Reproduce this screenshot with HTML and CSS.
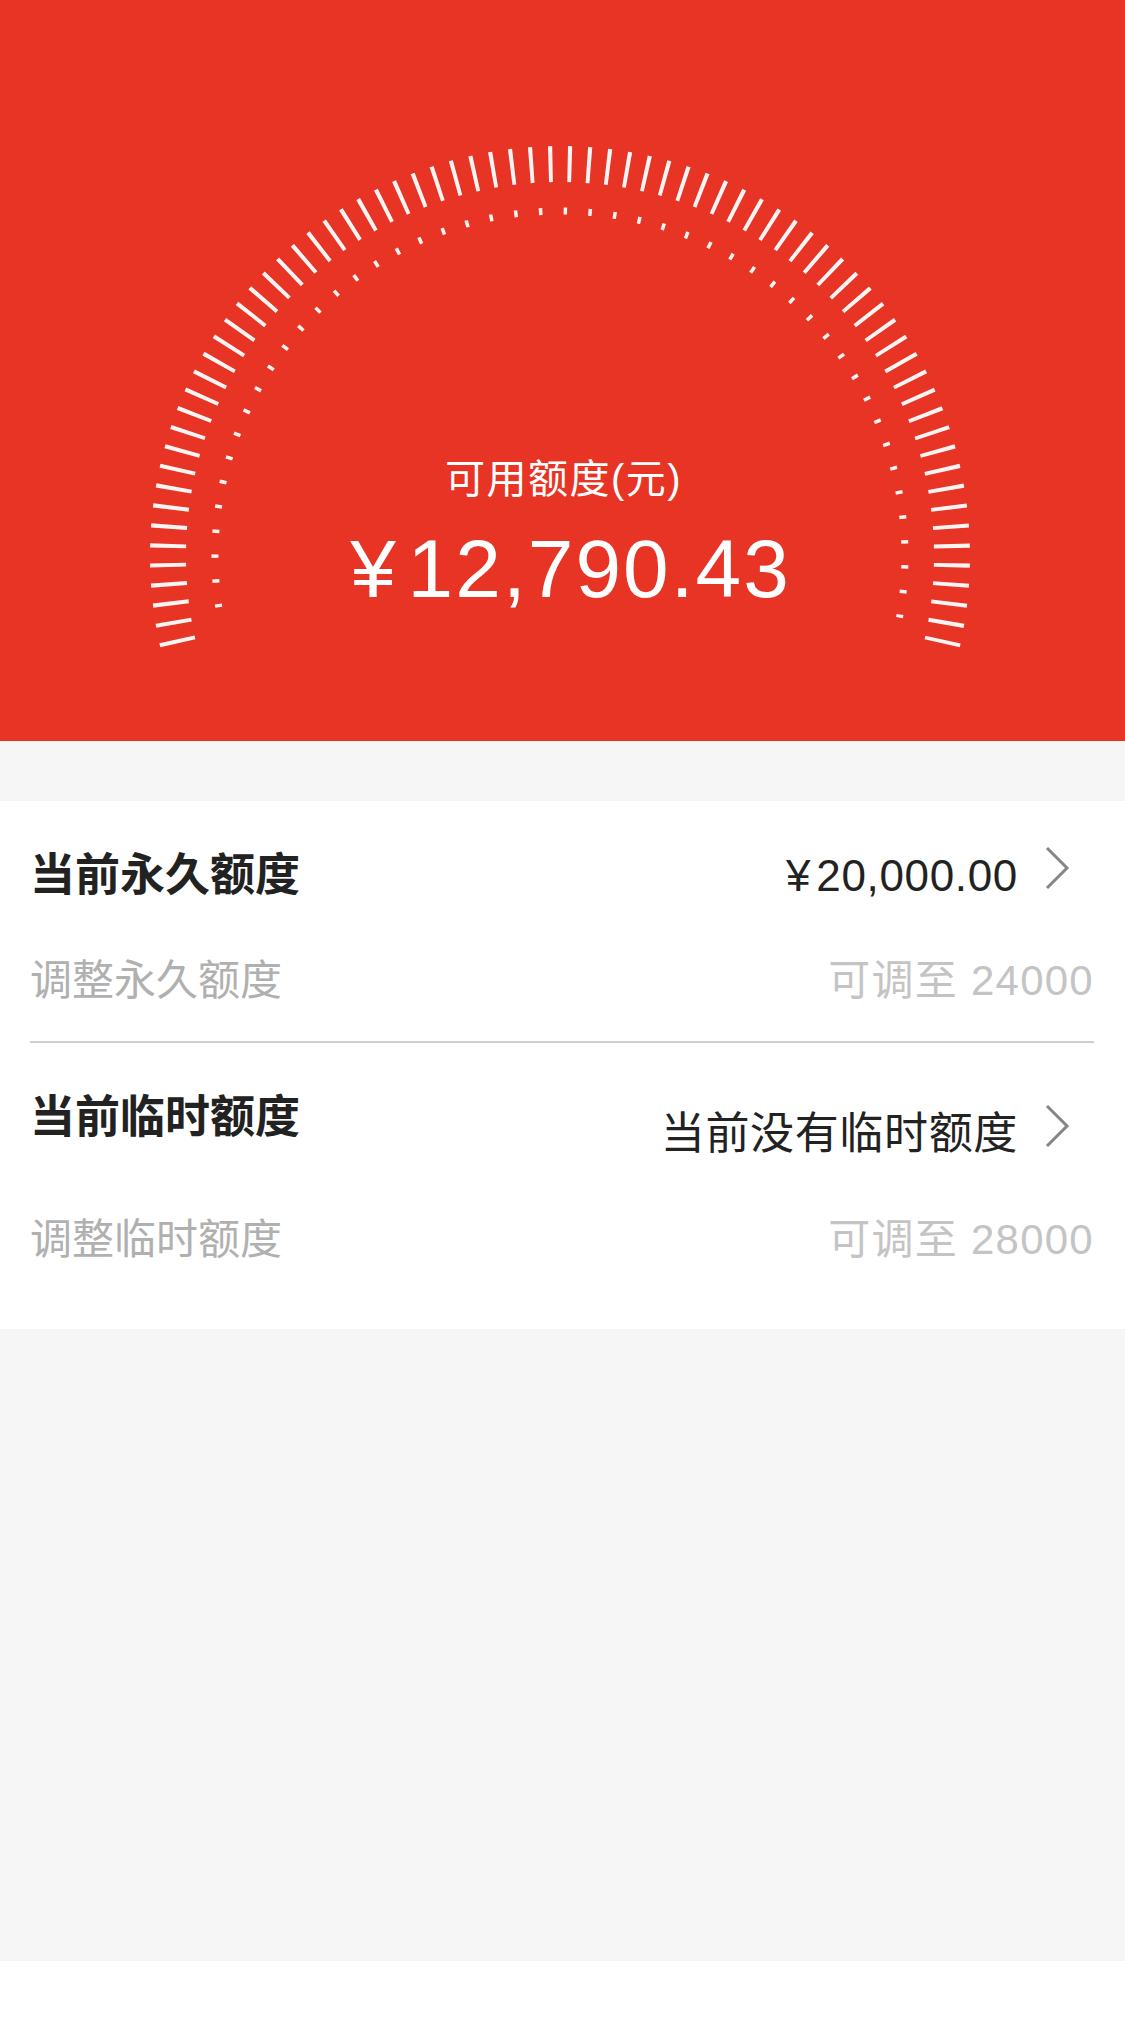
FILE: index.html
```html
<!DOCTYPE html>
<html lang="zh-CN">
<head>
<meta charset="utf-8">
<title>额度</title>
<link rel="stylesheet" href="styles.css">
</head>
<body>
<div class="page">
  <header class="hero">
    <svg class="gauge" viewBox="0 0 1125 741" width="1125" height="741" aria-hidden="true">
      <path class="ticks" d="M177.83 643.24 A392 392 0 1 1 942.17 643.24"/>
      <path class="dots" d="M218.83 607.29 A345 345 0 1 1 899.47 617.51"/>
    </svg>
    <div class="hero-text">
      <div class="hero-label">可用额度(元)</div>
      <div class="hero-amount"><span class="yen">¥</span>12,790.43</div>
    </div>
  </header>

  <section class="card">
    <div class="group">
      <div class="row-main">
        <span class="title">当前永久额度</span>
        <span class="value-wrap">
          <span class="value"><span class="yen-sm">¥</span>20,000.00</span>
          <svg class="chev" viewBox="0 0 28 46" width="28" height="46" aria-hidden="true"><polyline points="4,3 24,23 4,43"/></svg>
        </span>
      </div>
      <div class="row-sub row-sub-first">
        <span class="sub-left">调整永久额度</span>
        <span class="sub-right">可调至 24000</span>
      </div>
    </div>
    <div class="divider"></div>
    <div class="group">
      <div class="row-main">
        <span class="title">当前临时额度</span>
        <span class="value-wrap value-wrap-low">
          <span class="value">当前没有临时额度</span>
          <svg class="chev" viewBox="0 0 28 46" width="28" height="46" aria-hidden="true"><polyline points="4,3 24,23 4,43"/></svg>
        </span>
      </div>
      <div class="row-sub row-sub-last">
        <span class="sub-left">调整临时额度</span>
        <span class="sub-right">可调至 28000</span>
      </div>
    </div>
  </section>

  <div class="filler"></div>
  <div class="bottom-bar"></div>
</div>
</body>
</html>
```

FILE: styles.css
```css
html, body {
  margin: 0;
  padding: 0;
}

body {
  background: #f6f6f6;
  font-family: "Liberation Sans", "Noto Sans CJK SC", sans-serif;
}

.page {
  width: 1125px;
  min-height: 2020px;
  display: flex;
  flex-direction: column;
}

/* ---------- hero ---------- */
.hero {
  height: 741px;
  background: #e83425;
  display: grid;
}

.gauge,
.hero-text {
  grid-area: 1 / 1;
}

.gauge {
  display: block;
  width: 1125px;
  height: 741px;
}

.ticks {
  fill: none;
  stroke: #ffffff;
  stroke-width: 36;
  stroke-dasharray: 4 15.225;
  opacity: 0.95;
}

.dots {
  fill: none;
  stroke: #ffffff;
  stroke-width: 7;
  stroke-dasharray: 3.5 21.368;
  opacity: 0.95;
}

.hero-text {
  padding-top: 459px;
  text-align: center;
  color: #ffffff;
}

.hero-label {
  font-size: 40px;
  line-height: 40px;
  letter-spacing: 1.5px;
  padding-left: 2px;
}

.hero-amount {
  margin-top: 29px;
  padding-left: 16px;
  font-size: 82px;
  line-height: 82px;
  letter-spacing: 0.025em;
}

.yen {
  margin-right: 0.12em;
}

/* ---------- card ---------- */
.card {
  margin-top: 60px;
  background: #ffffff;
  padding: 0 31px 0 30px;
}

.row-main {
  height: 150px;
  display: flex;
  align-items: center;
  justify-content: space-between;
}

.title {
  font-size: 45px;
  line-height: 44px;
  font-weight: 600;
  color: #222222;
}

.value-wrap {
  display: flex;
  align-items: center;
  margin-right: 23px;
}

.value-wrap-low {
  margin-top: 32px;
}

.value {
  font-size: 44px;
  line-height: 44px;
  color: #222222;
  letter-spacing: 0.015em;
}

.yen-sm {
  margin-right: 0.12em;
}

.chev {
  display: block;
  width: 28px;
  height: 46px;
  margin-left: 25px;
  margin-bottom: 16px;
}

.chev polyline {
  fill: none;
  stroke: #858585;
  stroke-width: 3;
}

.row-sub {
  display: flex;
  justify-content: space-between;
  font-size: 42px;
  line-height: 42px;
}

.row-sub-first {
  margin-top: 9px;
  padding-bottom: 39px;
}

.row-sub-last {
  margin-top: 26px;
  padding-bottom: 68px;
}

.sub-left {
  color: #b0b0b0;
}

.sub-right {
  color: #c4c4c4;
  letter-spacing: 0.03em;
}

.divider {
  height: 2px;
  background: #cfcfcf;
  margin-left: 0;
}

/* ---------- bottom ---------- */
.filler {
  flex: 1;
}

.bottom-bar {
  height: 59px;
  background: #ffffff;
}
```
